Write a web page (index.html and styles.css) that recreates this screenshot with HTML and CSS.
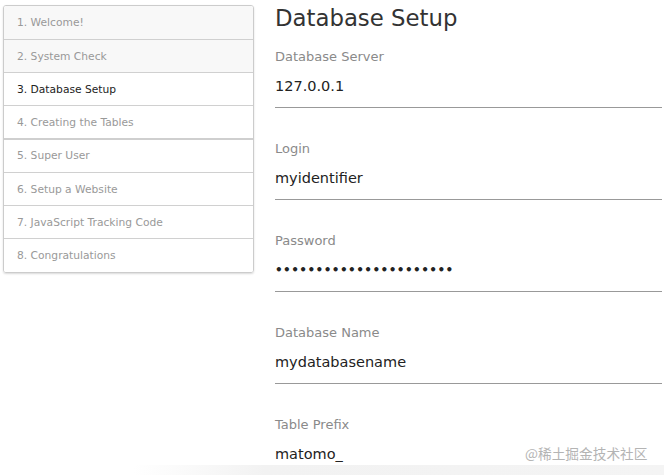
FILE: index.html
```html
<!DOCTYPE html>
<html>
<head>
<meta charset="utf-8">
<link rel="stylesheet" href="styles.css">
</head>
<body>
<div class="page">
  <nav class="steps">
    <div class="step done">1. Welcome!</div>
    <div class="step done">2. System Check</div>
    <div class="step current">3. Database Setup</div>
    <div class="step todo sep">4. Creating the Tables</div>
    <div class="step todo">5. Super User</div>
    <div class="step todo">6. Setup a Website</div>
    <div class="step todo">7. JavaScript Tracking Code</div>
    <div class="step todo last">8. Congratulations</div>
  </nav>
  <main class="content">
    <h1 class="title">Database Setup</h1>
    <div class="field">
      <div class="label">Database Server</div>
      <div class="value">127.0.0.1</div>
    </div>
    <div class="field">
      <div class="label">Login</div>
      <div class="value">myidentifier</div>
    </div>
    <div class="field">
      <div class="label">Password</div>
      <div class="value dots">••••••••••••••••••••••</div>
    </div>
    <div class="field">
      <div class="label">Database Name</div>
      <div class="value">mydatabasename</div>
    </div>
    <div class="field">
      <div class="label">Table Prefix</div>
      <div class="value">matomo_</div>
    </div>
  </main>
</div>
<div class="watermark">@稀土掘金技术社区</div>
<div class="fade"></div>
</body>
</html>
```
FILE: styles.css
```css
html, body {
  margin: 0;
  padding: 0;
  background: #fff;
  font-family: "DejaVu Sans", "Noto Sans CJK SC", sans-serif;
  overflow: hidden;
  height: 475px;
}
.page {
  display: flex;
  align-items: flex-start;
  padding: 5px 0 0 3px;
}
.steps {
  width: 249px;
  border: 1px solid #ccc;
  border-radius: 3px;
  box-shadow: 0 1px 2px rgba(0,0,0,0.15);
  overflow: hidden;
  flex: none;
}
.step {
  height: 33px;
  line-height: 33px;
  padding-left: 13px;
  font-size: 10.7px;
  color: #999;
  border-top: 1px solid #d0d0d0;
  box-sizing: border-box;
}
.step:first-child { border-top: none; height: 33px; }
.step.done { background: #f8f8f8; }
.step.current { color: #222; background: #fff; }
.step.todo { background: #fff; color: #999; }
.step.sep + .step { border-top: 2px solid #cfcfcf; height: 34px; line-height: 32px; }
.step.last { height: 34px; }
.content {
  margin-left: 21px;
  width: 387px;
}
.title {
  margin: 0;
  font-size: 22.8px;
  font-weight: normal;
  color: #333;
  line-height: 26px;
  padding-top: 0;
}
.field {
  margin-top: 18px;
}
.field + .field { margin-top: 33px; }
.label {
  font-size: 13px;
  color: #8a8a8a;
  line-height: 16px;
}
.value {
  font-size: 14.5px;
  color: #222;
  line-height: 18px;
  margin-top: 12px;
  padding-bottom: 12px;
  border-bottom: 1px solid #999;
}
.value.dots {
  font-size: 12px;
  letter-spacing: 0.45px;
  font-weight: bold;
}
.watermark {
  position: absolute;
  left: 525px;
  top: 443px;
  font-size: 13.7px;
  color: #b4b4b4;
  font-family: "Noto Sans CJK SC", "DejaVu Sans", sans-serif;
}
.fade {
  position: absolute;
  left: 0;
  right: 0;
  top: 465px;
  height: 10px;
  background: linear-gradient(to right, rgba(240,240,240,0) 20%, #f2f2f2 40%, #f4f4f4 100%);
}
```
